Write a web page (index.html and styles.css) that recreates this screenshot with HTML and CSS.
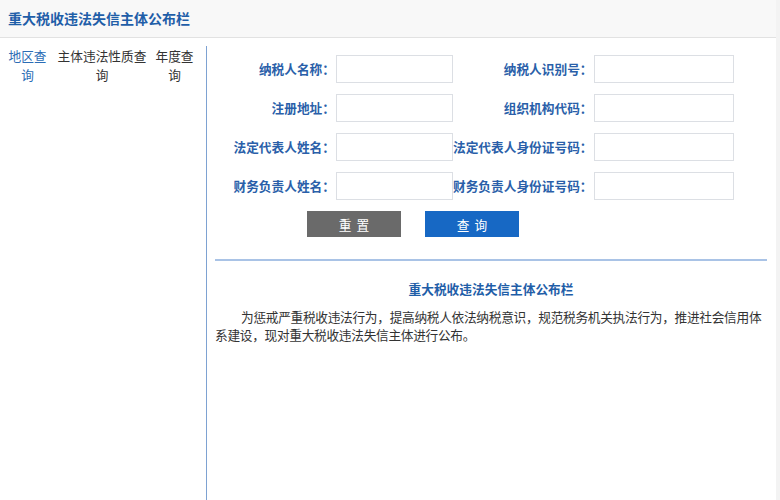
FILE: index.html
```html
<!DOCTYPE html>
<html lang="zh-CN">
  <head>
    <meta charset="UTF-8">
    <meta name="viewport" content="width=device-width, initial-scale=1.0">
    <title>重大税收违法失信主体公布栏</title>
    <link rel="stylesheet" href="styles.css">
  </head>
  <body>
    <div class="page">
      <div class="header">
        <h1 class="header-title">重大税收违法失信主体公布栏</h1>
      </div>

      <div class="content">
        <div class="sidebar">
          <div class="tabs">
            <div class="tab tab-short active">地区查询</div>
            <div class="tab tab-long">主体违法性质查询</div>
            <div class="tab tab-short">年度查询</div>
          </div>
        </div>

        <div class="main">
          <table class="query-form">
            <colgroup>
              <col style="width: 129px">
              <col style="width: 117px">
              <col style="width: 140px">
              <col style="width: 140px">
            </colgroup>
            <tr>
              <td class="label">纳税人名称：</td>
              <td><input type="text" class="field"></td>
              <td class="label">纳税人识别号：</td>
              <td><input type="text" class="field"></td>
            </tr>
            <tr>
              <td class="label">注册地址：</td>
              <td><input type="text" class="field"></td>
              <td class="label">组织机构代码：</td>
              <td><input type="text" class="field"></td>
            </tr>
            <tr>
              <td class="label">法定代表人姓名：</td>
              <td><input type="text" class="field"></td>
              <td class="label">法定代表人身份证号码：</td>
              <td><input type="text" class="field"></td>
            </tr>
            <tr>
              <td class="label">财务负责人姓名：</td>
              <td><input type="text" class="field"></td>
              <td class="label">财务负责人身份证号码：</td>
              <td><input type="text" class="field"></td>
            </tr>
          </table>

          <div class="buttons">
            <button class="btn btn-reset">重置</button>
            <button class="btn btn-query">查询</button>
          </div>

          <div class="notice">
            <h2 class="notice-title">重大税收违法失信主体公布栏</h2>
            <p class="notice-text">为惩戒严重税收违法行为，提高纳税人依法纳税意识，规范税务机关执法行为，推进社会信用体系建设，现对重大税收违法失信主体进行公布。</p>
          </div>
        </div>
      </div>
    </div>
  </body>
</html>
```

FILE: styles.css
```css
html {
  background: #f3f3f3;
}

body {
  font-family: "Noto Sans CJK SC", "Microsoft YaHei", sans-serif;
  font-size: 12.7px;
  color: #333;
  margin: 0;
}

.page {
  width: 776px;
  height: 500px;
  background: #fff;
  display: flex;
  flex-direction: column;
  overflow: hidden;
}

.header {
  height: 37px;
  background: #f8f8f8;
  border-bottom: 1px solid #e2e2e2;
  display: flex;
  align-items: center;
  padding: 0 8px;
  flex-shrink: 0;
}

.header-title {
  margin: 0;
  font-size: 14px;
  font-weight: bold;
  color: #1f5ea8;
  line-height: 20px;
  padding-bottom: 2px;
}

.content {
  flex: 1;
  display: flex;
  margin-top: 8px;
}

.sidebar {
  width: 206px;
  border-right: 1px solid #7ea2d2;
  flex-shrink: 0;
}

.tabs {
  display: flex;
  padding-left: 8px;
}

.tab {
  line-height: 19px;
  text-align: center;
  color: #333;
  cursor: pointer;
}

.tab-short {
  width: 39px;
}

.tab-long {
  width: 90px;
  margin: 0 8px 0 10px;
}

.tab.active {
  color: #2b6cb5;
}

.main {
  flex: 1;
  padding-top: 3px;
}

.query-form {
  border-collapse: collapse;
  table-layout: fixed;
}

.query-form td {
  height: 39px;
  padding: 0;
  vertical-align: middle;
}

.query-form .label {
  text-align: right;
  font-weight: bold;
  color: #2a5fa9;
  white-space: nowrap;
  padding-right: 1px;
}

.field {
  display: block;
  box-sizing: border-box;
  width: 100%;
  height: 28px;
  margin: 0;
  border: 1px solid #dcdfe4;
  background: #fff;
  outline: none;
}

.buttons {
  display: flex;
  gap: 24px;
  margin: 6px 0 0 100px;
}

.btn {
  width: 94px;
  height: 26px;
  border: none;
  color: #fff;
  font-family: inherit;
  font-size: 12.7px;
  letter-spacing: 5px;
  text-indent: 5px;
  cursor: pointer;
}

.btn-reset {
  background: #6a6a6a;
}

.btn-query {
  background: #1768c4;
}

.notice {
  margin: 22px 9px 0 8px;
  border-top: 2px solid #a9c3e6;
}

.notice-title {
  margin: 18px 0 0;
  font-size: 12.7px;
  font-weight: bold;
  color: #1f5ea8;
  text-align: center;
  line-height: 20px;
}

.notice-text {
  margin: 9px 0 0;
  font-size: 12.7px;
  letter-spacing: -0.3px;
  line-height: 18px;
  text-indent: 26px;
  color: #333;
}
```
